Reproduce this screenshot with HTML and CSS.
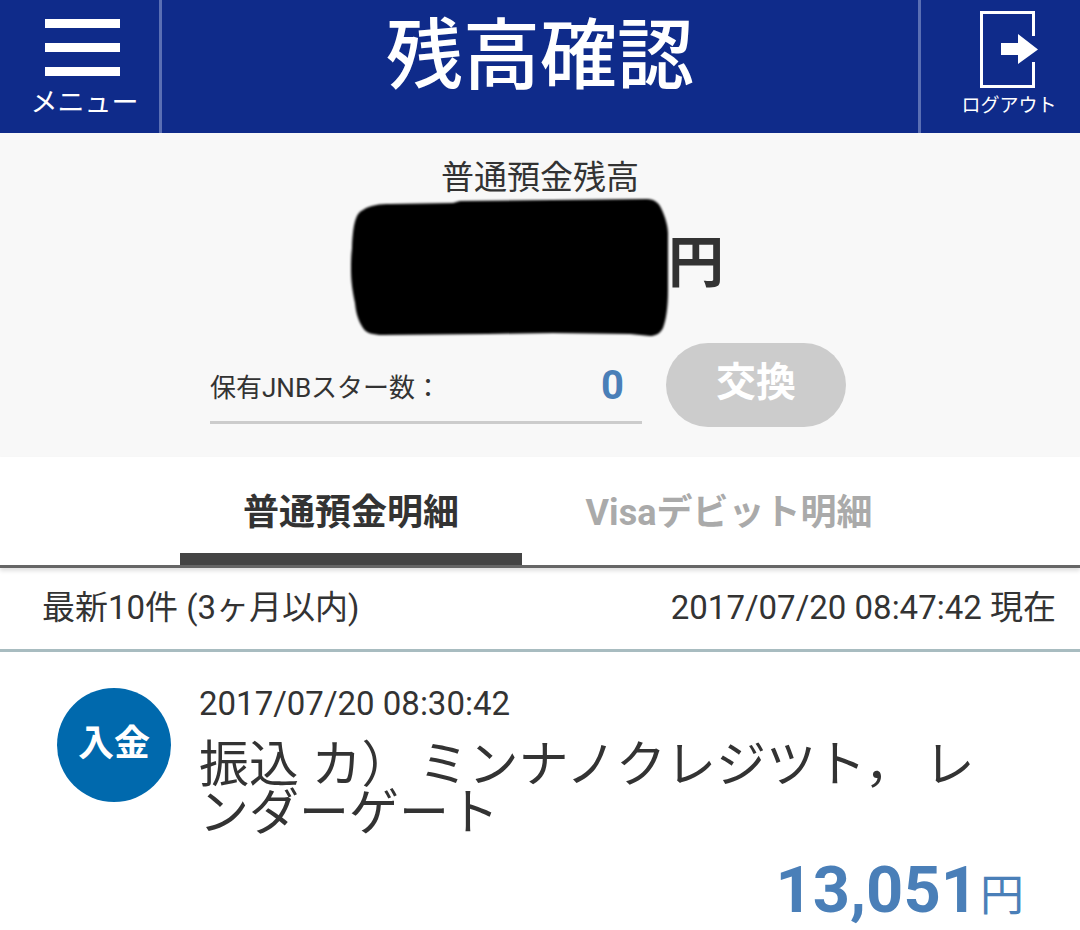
FILE: index.html
```html
<!DOCTYPE html>
<html lang="ja">
<head>
<meta charset="utf-8">
<title>残高確認</title>
<link rel="stylesheet" href="styles.css">
</head>
<body>
<header class="header">
  <div class="menu">
    <div class="bars"><span></span><span></span><span></span></div>
    <div class="menu-label">メニュー</div>
  </div>
  <h1 class="title">残高確認</h1>
  <div class="logout">
    <svg class="logout-icon" width="58" height="77" viewBox="0 0 58 77">
      <path d="M53.500 25V1.500H1.500V75.500H53.500V51" fill="none" stroke="#fff" stroke-width="3"/>
      <path d="M21 32H38V23L58 38.500L38 53V44H21Z" fill="#fff"/>
    </svg>
    <div class="logout-label">ログアウト</div>
  </div>
</header>
<section class="summary">
  <div class="summary-label">普通預金残高</div>
  <div class="balance">
    <svg class="redact" width="322" height="140" viewBox="0 0 322 140">
      <path d="M4 50C5 25 8 15 15 12C22 7 32 6 42 6L105 5L112 3L299 1C306 1 311 5 313 10C318 20 320 30 320 35L320 92C320 110 318 122 315 130C312 136 307 138 302 138L282 136L205 135L139 136L35 137C25 137 18 135 15 130C10 122 8 115 7 105C5 95 3 85 3 72C3 65 3 58 4 50Z" fill="#000"/>
    </svg>
    <span class="yen-big">円</span>
  </div>
  <div class="stars">
    <div class="star-field">
      <span class="star-label">保有JNBスター数：</span>
      <span class="star-value">0</span>
    </div>
    <div class="exchange">交換</div>
  </div>
</section>
<nav class="tabs">
  <div class="tab tab-active">普通預金明細</div>
  <div class="tab">Visaデビット明細</div>
</nav>
<div class="info">
  <span>最新10件 (3ヶ月以内)</span>
  <span>2017/07/20 08:47:42 現在</span>
</div>
<article class="entry">
  <div class="badge">入金</div>
  <div class="entry-body">
    <div class="entry-date">2017/07/20 08:30:42</div>
    <div class="entry-desc">振込 カ）<span class="desc-run">ミンナノクレジツト，</span><span class="desc-space">　</span><span>レ</span><span>ンダーゲート</span></div>
    <div class="entry-amount"><span class="amount">13,051</span><span class="yen-small">円</span></div>
  </div>
</article>
</body>
</html>
```
FILE: styles.css
```css
* { box-sizing: border-box; }
html, body { margin: 0; padding: 0; }
body {
  width: 1080px;
  height: 930px;
  overflow: hidden;
  background: #fff;
  color: #333;
  font-family: Roboto, "Noto Sans CJK JP", sans-serif;
}
.header {
  height: 133px;
  background: #0f2b8a;
  color: #fff;
  display: grid;
  grid-template-columns: 162px 1fr 162px;
}
.menu {
  border-right: 3px solid #5a6fb4;
  display: flex;
  flex-direction: column;
  align-items: center;
  padding-top: 19px;
}
.bars { width: 75px; display: flex; flex-direction: column; gap: 15px; margin-left: 6px; }
.bars span { height: 9px; background: #fff; display: block; }
.menu-label { font-size: 27px; line-height: 34px; margin-top: 10px; margin-left: 10px; white-space: nowrap; }
.title {
  margin: 0;
  text-align: center;
  font-size: 77px;
  font-weight: 500;
  line-height: 114px;
}
.logout {
  border-left: 3px solid #5a6fb4;
  display: flex;
  flex-direction: column;
  align-items: center;
  padding-top: 11px;
  padding-left: 17px;
}
.logout-icon { display: block; }
.logout-label { font-size: 19px; line-height: 28px; margin-top: 4px; white-space: nowrap; }
.summary {
  height: 324px;
  background: #f8f8f8;
  display: flex;
  flex-direction: column;
  align-items: center;
  padding-top: 24px;
}
.summary-label { font-size: 33px; line-height: 42px; }
.balance {
  height: 130px;
  width: 372px;
  display: flex;
  align-items: center;
  position: relative;
  padding-left: 315px;
  margin-left: -2px;
}
.redact { position: absolute; left: -5px; top: -1px; filter: blur(1px); }
.yen-big { font-size: 56px; font-weight: 700; line-height: 60px; margin-top: -3px; }
.stars {
  width: 636px;
  margin-right: 24px;
  display: flex;
  gap: 24px;
  align-items: flex-start;
  margin-top: 14px;
}
.star-field {
  width: 432px;
  height: 81px;
  border-bottom: 3px solid #ccc;
  display: flex;
  justify-content: space-between;
  align-items: center;
  padding: 6px 18px 0 0;
}
.star-label { font-size: 26px; }
.star-value { font-size: 40px; font-weight: 700; color: #4a7fb8; }
.exchange {
  width: 180px;
  height: 84px;
  border-radius: 42px;
  background: #ccc;
  color: #fff;
  font-size: 40px;
  font-weight: 700;
  line-height: 80px;
  text-align: center;
}
.tabs {
  height: 111px;
  display: grid;
  grid-template-columns: 342px 342px;
  column-gap: 36px;
  padding-left: 180px;
  border-bottom: 3px solid #666;
  box-shadow: 0 3px 4px rgba(0,0,0,.12);
  position: relative;
}
.tab {
  text-align: center;
  font-size: 36px;
  font-weight: 700;
  line-height: 113px;
  color: #aaa;
  white-space: nowrap;
  height: 108px;
}
.tab-active { color: #333; border-bottom: 12px solid #444; line-height: 112px; }
.info {
  height: 84px;
  border-bottom: 3px solid #a8bcc0;
  display: flex;
  justify-content: space-between;
  align-items: center;
  padding: 0 24px 7px 42px;
  font-size: 33px;
}
.entry {
  display: flex;
  padding: 36px 60px 0 57px;
  gap: 28px;
}
.badge {
  width: 114px;
  height: 114px;
  border-radius: 50%;
  background: #0069ad;
  color: #fff;
  font-size: 36px;
  font-weight: 700;
  line-height: 112px;
  text-align: center;
  flex: none;
}
.entry-body { flex: 1; min-width: 0; }
.entry-date { font-size: 33px; line-height: 32px; }
.entry-desc { font-size: 50px; line-height: 42px; margin-top: 24px; }
.desc-run { margin-left: 7px; }
.desc-space { font-size: 35px; }
.entry-amount { display: flex; justify-content: flex-end; align-items: flex-end; margin: 21px -4px 0 0; }
.amount { font-size: 65px; font-weight: 700; color: #4a7fb8; line-height: 70px; }
.yen-small { font-size: 44px; color: #4a7fb8; margin-left: 2px; line-height: 58px; }
```
